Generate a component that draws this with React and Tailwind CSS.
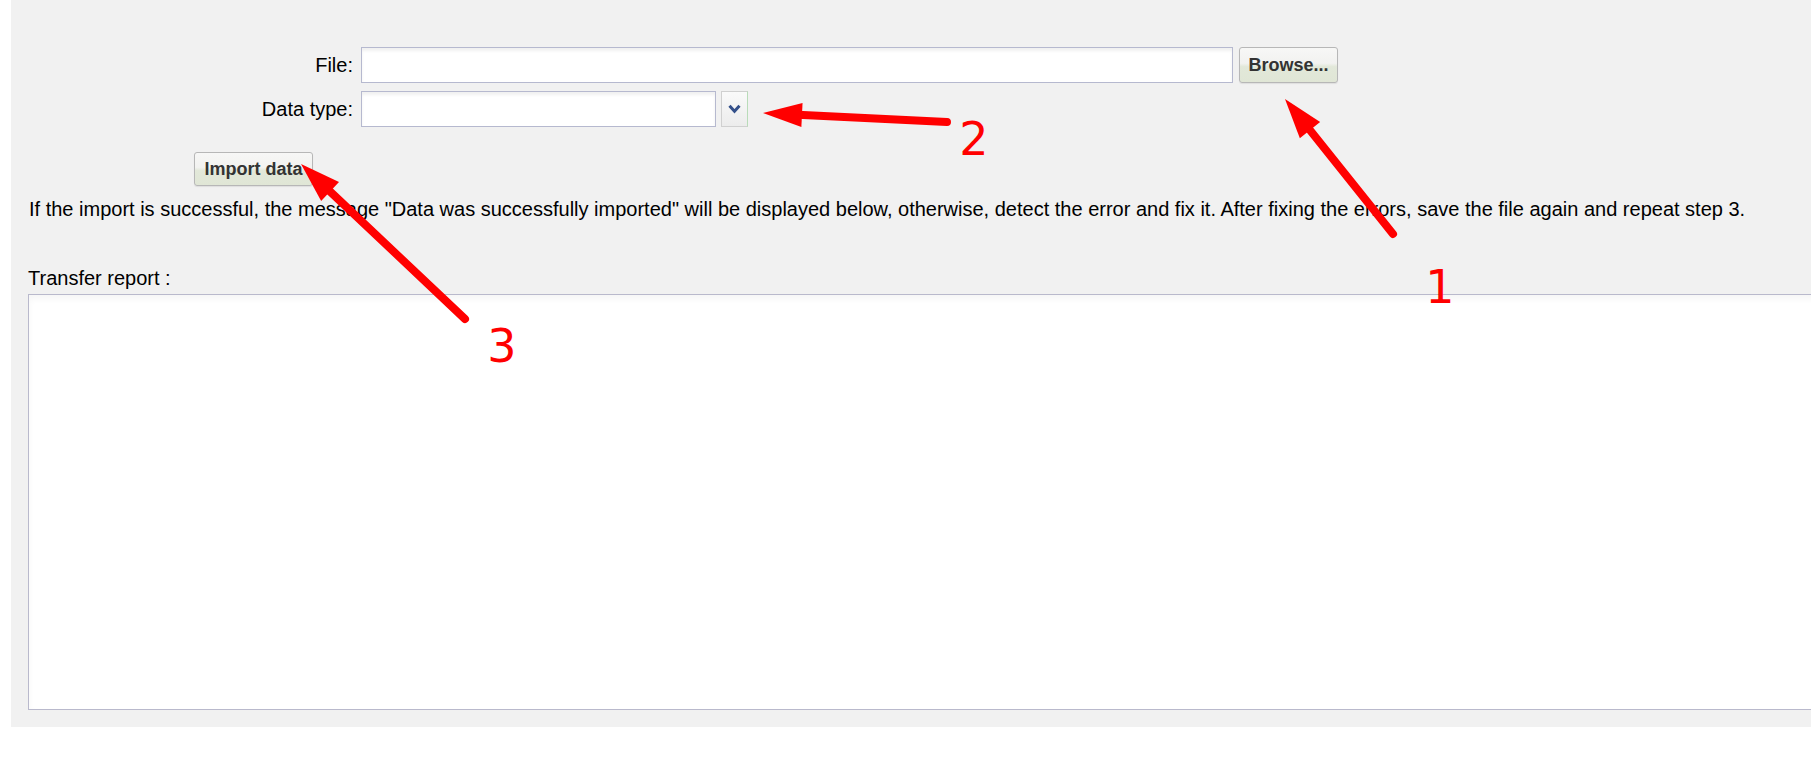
import React from 'react';

const Arrow = ({ x1, y1, x2, y2, head = 40, half = 13 }) => {
  const dx = x2 - x1;
  const dy = y2 - y1;
  const len = Math.hypot(dx, dy);
  const ux = dx / len;
  const uy = dy / len;
  const bx = x2 - ux * head;
  const by = y2 - uy * head;
  const px = -uy * half;
  const py = ux * half;
  const pts = `${x2},${y2} ${bx + px},${by + py} ${bx - px},${by - py}`;
  return (
    <g>
      <line x1={x1} y1={y1} x2={bx + ux * 4} y2={by + uy * 4} stroke="#ff0000" strokeWidth="8" strokeLinecap="round" />
      <polygon points={pts} fill="#ff0000" />
    </g>
  );
};

const Btn = ({ children, className = '' }) => (
  <button
    className={`h-full rounded-[3px] border border-[#b7b7b7] bg-[linear-gradient(to_bottom,#f7f7f6_0%,#f2f2f0_45%,#e2e8d9_55%,#e0e6d6_100%)] text-[18px] font-bold text-[#333] leading-none shadow-[0_1px_1px_rgba(0,0,0,0.08)] ${className}`}
  >
    {children}
  </button>
);

const App = () => {
  return (
    <div className="relative h-[763px] overflow-hidden bg-white font-['Liberation_Sans',Arial,sans-serif] text-black">
      <div className="ml-[11px] h-[727px] bg-[#f1f1f1] pt-[47px]">
        {/* File row */}
        <div className="flex h-[36px] items-center">
          <label className="w-[342px] text-right text-[20px] leading-[23px]">File:</label>
          <div className="ml-[8px] h-full w-[872px] border border-[#b6b9cf] bg-white shadow-[inset_0_3px_3px_rgba(0,0,0,0.06)]" />
          <Btn className="ml-[6px] w-[99px]">Browse...</Btn>
        </div>

        {/* Data type row */}
        <div className="mt-[8px] flex h-[36px] items-center">
          <label className="w-[342px] text-right text-[20px] leading-[23px]">Data type:</label>
          <div className="ml-[8px] h-full w-[355px] border border-[#b6b9cf] bg-white shadow-[inset_0_3px_3px_rgba(0,0,0,0.06)]" />
          <div className="ml-[5px] flex h-full w-[27px] items-center justify-center border border-[#d0d0d0] border-r-[#b9dcb9] bg-[linear-gradient(to_bottom,#fafafa,#ececec)]">
            <svg width="13" height="10" viewBox="0 0 13 10">
              <path d="M1.5 1.8 L6.5 7.2 L11.5 1.8" fill="none" stroke="#34508a" strokeWidth="3" />
            </svg>
          </div>
        </div>

        {/* Import button */}
        <div className="ml-[183px] mt-[25px] h-[34px]">
          <Btn className="w-[119px]">Import data</Btn>
        </div>

        <p className="ml-[18px] mt-[12px] whitespace-nowrap text-[20px] leading-[23px]">
          If the import is successful, the message "Data was successfully imported" will be displayed below, otherwise, detect the error and fix it. After fixing the errors, save the file again and repeat step 3.
        </p>

        <p className="ml-[17px] mt-[46px] text-[20px] leading-[23px]">Transfer report :</p>

        <div className="ml-[17px] mt-[4px] h-[416px] w-[1820px] border border-[#b9b9cc] bg-white shadow-[inset_0_4px_6px_rgba(0,0,0,0.04)]" />
      </div>

      {/* red annotations */}
      <svg className="pointer-events-none absolute left-0 top-0" width="1811" height="763">
        <Arrow x1={1393} y1={234} x2={1285} y2={99} />
        <Arrow x1={947} y1={122} x2={763} y2={113} head={39} half={12} />
        <Arrow x1={465} y1={319} x2={301} y2={164} />
        <g fill="#ff0000" fontFamily="'DejaVu Sans', sans-serif" fontSize="46" textAnchor="middle">
          <text x="1440" y="303">1</text>
          <text x="974" y="155">2</text>
          <text x="502" y="362">3</text>
        </g>
      </svg>
    </div>
  );
};

export default App;
